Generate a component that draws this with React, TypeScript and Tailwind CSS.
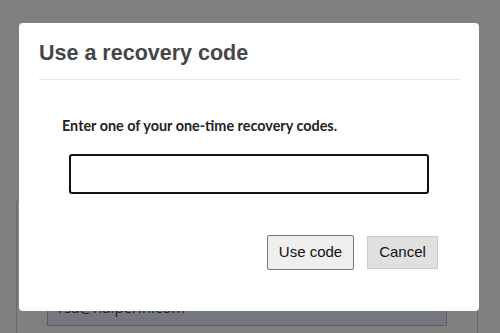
import React from "react";

export default function App() {
  return (
    <div className="relative w-[500px] h-[333px] overflow-hidden bg-[#808080]">
      {/* page behind overlay */}
      <div className="pt-[201px] pl-[16px]">
        <div className="w-[462px] h-[200px] border border-[#686868] pl-[30px] pt-[88px]">
          <div className="w-[400px] h-[36px] border border-[#5e5e5e] bg-[#74787e] pl-[10px] pt-[6px] text-[15px] leading-[20px] text-[#1c1c1c] font-['Open_Sans',sans-serif]">
            rsa@halperin.com
          </div>
        </div>
      </div>

      {/* dialog */}
      <div className="absolute left-[19px] top-[23px] w-[460px] h-[288px] rounded-[4px] bg-white">
        <div className="mx-[20px] pt-[17px] pb-[13px] border-b border-[#e3e3e3] font-['Liberation_Sans',Arial,sans-serif] text-[21.5px] leading-[26px] font-bold text-[#464646]">
          Use a recovery code
        </div>
        <div className="pl-[43px] pt-[36px] font-['Lato',sans-serif] text-[14.4px] leading-[20px] font-bold text-[#222]">
          Enter one of your one-time recovery codes.
        </div>
        <div className="pl-[50px] pt-[18px]">
          <input
            className="block w-[360px] h-[40px] border-2 border-[#111] rounded-[3px] outline-none"
            aria-label="Recovery code"
          />
        </div>
        <div className="flex justify-end gap-[13px] pr-[41px] pt-[41px] font-['Liberation_Sans',Arial,sans-serif] text-[15px] text-[#111]">
          <button className="w-[87px] h-[35px] bg-[#efefef] border border-[#767676] rounded-[2px]">
            Use code
          </button>
          <button className="w-[71px] h-[33px] mt-[1px] bg-[#e0e0e0] border border-[#cccccc]">
            Cancel
          </button>
        </div>
      </div>
    </div>
  );
}
